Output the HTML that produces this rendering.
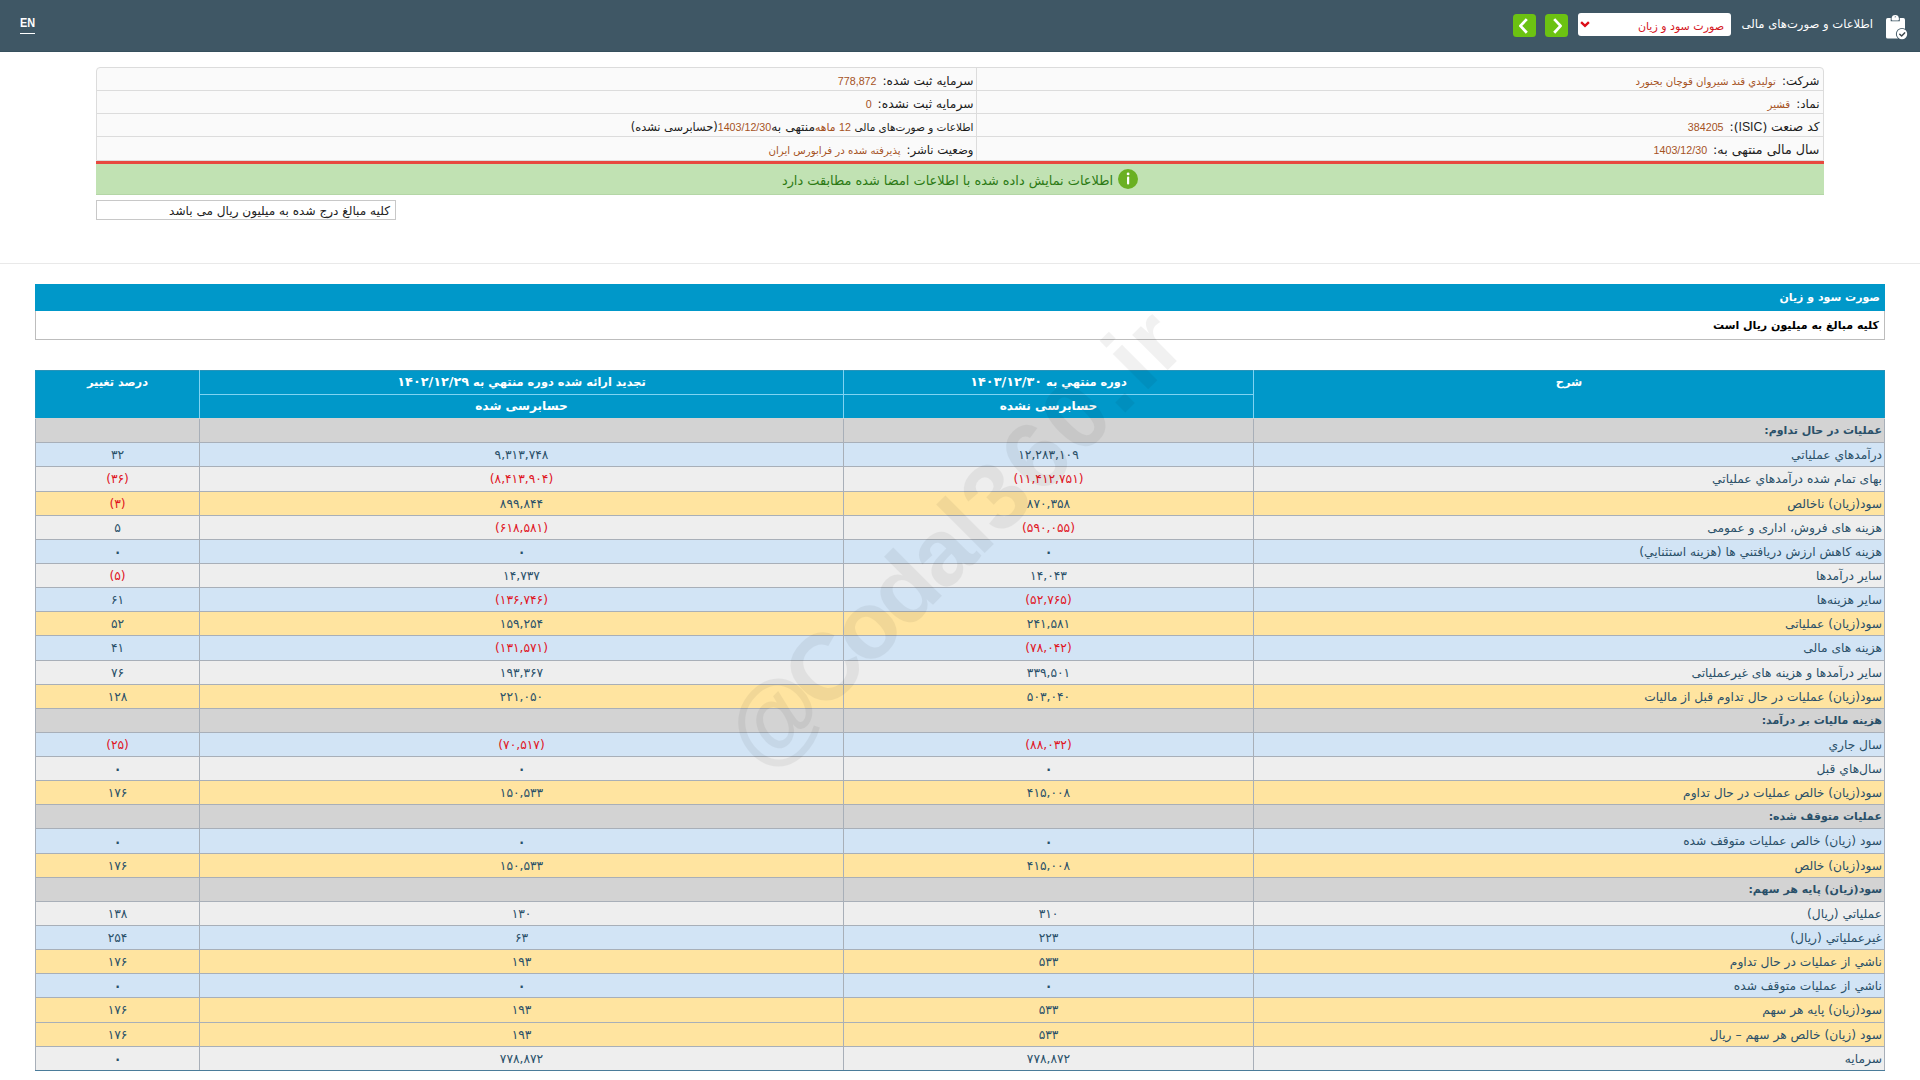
<!DOCTYPE html>
<html lang="fa" dir="rtl">
<head>
<meta charset="utf-8">
<title>صورت سود و زیان</title>
<style>
html,body{margin:0;padding:0;}
body{width:1920px;height:1080px;overflow:hidden;background:#fff;position:relative;font-family:"DejaVu Sans","Liberation Sans",sans-serif;font-size:11px;color:#222;direction:rtl;}
.en{font-family:"Liberation Sans","DejaVu Sans",sans-serif;}
.abs{position:absolute;white-space:nowrap;}
#hdr{position:absolute;left:0;top:0;width:1920px;height:52px;background:#3f5765;border-bottom:1px solid #36505d;box-sizing:border-box;}
#enlink{left:20px;top:14px;width:15px;height:19px;border-bottom:1px solid #fff;direction:ltr;text-align:left;}
#enlink span{display:inline-block;line-height:18px;font-weight:bold;font-size:12.5px;color:#fff;transform:scaleX(0.87);transform-origin:0 50%;}
#ttl{right:47px;top:12px;height:24px;line-height:24px;font-size:11.6px;color:#fff;}
#sel{left:1578px;top:13px;width:153px;height:23px;background:#fff;border-radius:3px;box-sizing:border-box;}
#sel span{position:absolute;right:7px;top:1.5px;line-height:23px;font-size:11px;color:#d4141c;}
.btn{top:14px;width:23px;height:23px;background:#6cc212;border-radius:3.5px;}
#info{position:absolute;left:96px;top:67px;width:1728px;height:94px;box-sizing:border-box;border:1px solid #dcdcdc;border-radius:4px 4px 0 0;background:#fafafa;}
#info .row{position:absolute;left:0;width:1726px;height:23px;border-bottom:1px solid #dcdcdc;box-sizing:border-box;}
#info .vd{position:absolute;left:879px;top:0;width:1px;height:92px;background:#dcdcdc;}
.lb{font-size:12.3px;color:#1c1c1c;}
.vl{font-size:10.2px;color:#a5521e;margin-right:6px;}
.vl.en{font-size:10.7px;}
.cell .vl .en{font-size:10.7px;}
.cell{position:absolute;top:2px;height:22px;line-height:22px;white-space:nowrap;}
#red{position:absolute;left:96px;top:161px;width:1728px;height:3px;background:#e8483f;}
#grn{position:absolute;left:96px;top:164px;width:1728px;height:31px;background:#c1e2b3;box-sizing:border-box;border-bottom:1px solid #b4d6a6;}
#grn span{position:absolute;right:711px;top:0.5px;line-height:31px;font-size:12.88px;color:#2c7a14;white-space:nowrap;}
#note{position:absolute;left:96px;top:200px;width:300px;height:20px;box-sizing:border-box;border:1px solid #c8c8c8;background:#fff;line-height:20px;font-size:12.1px;color:#222;padding-right:5px;white-space:nowrap;}
#sep{position:absolute;left:0;top:263px;width:1920px;height:1px;background:#e9e9e9;}
#tbar{position:absolute;left:35px;top:284px;width:1850px;height:27px;background:#0098c9;color:#fff;font-weight:bold;font-size:11px;line-height:27px;box-sizing:border-box;padding-right:5px;}
#tsub{position:absolute;left:35px;top:311px;width:1850px;height:29px;background:#fff;border:1px solid #bdbdbd;border-top:none;box-sizing:border-box;color:#000;font-weight:bold;font-size:11px;line-height:30px;padding-right:5px;}
#tb{position:absolute;left:35px;top:370px;width:1849px;border-collapse:collapse;table-layout:fixed;font-size:11px;color:#2a5069;}
#tb th{background:#0098c9;color:#fff;font-weight:bold;font-size:11.4px;height:23px;padding:0;border:1px solid #7fd3f2;border-top-color:#2a93b8;vertical-align:top;line-height:23px;text-align:center;}
#tb thead tr:first-child th:first-child{border-right-color:#1a94bf;}
#tb thead tr:first-child th:last-child{border-left-color:#1a94bf;}
#tb th .hd{font-size:12.8px;line-height:12px;}
#tb tr.h2 th{font-size:12.2px;}
#tb td{height:23px;padding:0;border:1px solid #a8afb8;text-align:center;line-height:22px;font-size:12.25px;vertical-align:middle;white-space:nowrap;}
#tb tr.t td{height:24px;}
#tb td.d{text-align:right;padding-right:2px;}
#tb tr.sec td{background:#d3d3d3;font-weight:bold;font-size:11px;}
#tb thead tr:last-child th, #tb th[rowspan]{border-bottom-color:#d3d3d3;}
#tb tr.b td{background:#d2e4f5;}
#tb tr.g td{background:#eeeeee;}
#tb tr.y td{background:#ffe4a0;}
#tb td.n{color:#e0141e;}
#tb .z{font-size:20px;line-height:0;position:relative;top:2.6px;}
#tb tbody tr:last-child td{border-bottom-color:#4b7c9a;}
#wm{position:absolute;left:952.5px;top:537.5px;width:0;height:0;opacity:0.05;}
#wm i{font-style:normal;}
#wm span{position:absolute;left:-400px;top:-60px;width:800px;height:120px;line-height:120px;text-align:center;font-family:"Liberation Sans",sans-serif;font-weight:bold;font-size:94.6px;color:#000;transform:rotate(-45deg);direction:ltr;white-space:nowrap;}
</style>
</head>
<body>
<div id="hdr">
  <div id="enlink" class="abs en"><span>EN</span></div>
  <svg class="abs" style="left:1885px;top:14px" width="26" height="28" viewBox="0 0 26 28">
    <rect x="1" y="4" width="19" height="20.6" rx="1.7" fill="#fff"/>
    <path d="M5.7 7.3V4.4Q5.9 0.1 10.25 0.1Q14.6 0.1 14.8 4.4V7.3z" fill="#3f5765"/>
    <path d="M6.6 5.4V4.4Q6.9 1 10.25 1Q13.6 1 13.9 4.4V5.4a1 1 0 0 1-1 1H7.6a1 1 0 0 1-1-1z" fill="#fff"/>
    <path d="M10.25 2.1l0.75 1.1h-1.5z" fill="#3f5765"/>
    <circle cx="17" cy="20" r="6.1" fill="#3f5765"/>
    <circle cx="17" cy="20" r="5.2" fill="#fff"/>
    <path d="M14.8 20.3l1.8 1.7 3-3.1" fill="none" stroke="#3d474d" stroke-width="1.5" stroke-linecap="round" stroke-linejoin="round"/>
  </svg>
  <div id="ttl" class="abs">اطلاعات و صورت‌های مالی</div>
  <div id="sel" class="abs"><span>صورت سود و زیان</span>
    <svg style="position:absolute;left:0;top:0" width="16" height="23" viewBox="0 0 16 23"><path d="M3.1 9.1L7 12.8L10.9 9.1" fill="none" stroke="#dc0d18" stroke-width="2.4" stroke-linecap="butt" stroke-linejoin="miter"/></svg>
  </div>
  <div class="btn abs" style="left:1545px"><svg width="23" height="23" viewBox="0 0 23 23"><path d="M9.2 5.1L15.6 11.9L9.2 18.7" fill="none" stroke="#fff" stroke-width="2.8" stroke-linecap="butt" stroke-linejoin="round"/></svg></div>
  <div class="btn abs" style="left:1513px"><svg width="23" height="23" viewBox="0 0 23 23"><path d="M13.8 5.1L7.4 11.9L13.8 18.7" fill="none" stroke="#fff" stroke-width="2.8" stroke-linecap="butt" stroke-linejoin="round"/></svg></div>
</div>

<div id="info">
  <div class="vd"></div>
  <div class="row" style="top:0">
    <div class="cell" style="right:3.5px"><span class="lb" style="font-size:11.8px">شرکت:</span><span class="vl">توليدي قند شيروان قوچان بجنورد</span></div>
    <div class="cell" style="right:849.5px"><span class="lb" style="font-size:12.2px">سرمایه ثبت شده:</span><span class="vl en">778,872</span></div>
  </div>
  <div class="row" style="top:23px">
    <div class="cell" style="right:3.5px"><span class="lb" style="font-size:12px">نماد:</span><span class="vl">قشير</span></div>
    <div class="cell" style="right:849.5px"><span class="lb" style="font-size:12.3px">سرمایه ثبت نشده:</span><span class="vl en">0</span></div>
  </div>
  <div class="row" style="top:46px">
    <div class="cell" style="right:3.5px"><span class="lb">کد صنعت (<span class="en">ISIC</span>):</span><span class="vl en">384205</span></div>
    <div class="cell" style="right:849.5px;font-size:11.1px;color:#1c1c1c"><span style="font-size:10.5px">اطلاعات و صورت‌های مالی</span> <span class="vl" style="margin:0;font-size:10.8px"><span class="en">12</span> ماهه</span>&zwnj;<span style="font-size:12.3px">منتهی به</span><span class="vl en" style="margin:0">1403/12/30</span><span style="font-size:11.4px">(حسابرسی نشده)</span></div>
  </div>
  <div class="row" style="top:69px;border-bottom:none">
    <div class="cell" style="right:3.5px"><span class="lb" style="font-size:12.7px">سال مالی منتهی به:</span><span class="vl en">1403/12/30</span></div>
    <div class="cell" style="right:849.5px"><span class="lb" style="font-size:11.7px">وضعیت ناشر:</span><span class="vl">پذیرفته شده در فرابورس ایران</span></div>
  </div>
</div>
<div id="red"></div>
<div id="grn">
  <svg style="position:absolute;left:1022px;top:5px" width="20" height="20" viewBox="0 0 20 20"><circle cx="10" cy="10" r="10" fill="#6ab023"/><rect x="9" y="7.6" width="2.2" height="8" rx="1" fill="#fff"/><circle cx="10.1" cy="4.9" r="1.4" fill="#fff"/></svg>
  <span>اطلاعات نمایش داده شده با اطلاعات امضا شده مطابقت دارد</span>
</div>
<div id="note">کلیه مبالغ درج شده به میلیون ریال می باشد</div>
<div id="sep"></div>

<div id="tbar">صورت سود و زیان</div>
<div id="tsub">کلیه مبالغ به میلیون ریال است</div>

<table id="tb">
<colgroup><col style="width:631px"><col style="width:410px"><col style="width:644px"><col style="width:164px"></colgroup>
<thead>
<tr><th rowspan="2">شرح</th><th>دوره منتهي به <span class="hd">۱۴۰۳/۱۲/۳۰</span></th><th>تجديد ارائه شده دوره منتهي به <span class="hd">۱۴۰۲/۱۲/۲۹</span></th><th rowspan="2">درصد تغییر</th></tr>
<tr class="h2"><th>حسابرسی نشده</th><th>حسابرسی شده</th></tr>
</thead>
<tbody>
<tr class="sec"><td class="d">عملیات در حال تداوم:</td><td></td><td></td><td></td></tr>
<tr class="b"><td class="d">درآمدهاي عملياتي</td><td>۱۲,۲۸۳,۱۰۹</td><td>۹,۳۱۳,۷۴۸</td><td>۳۲</td></tr>
<tr class="g t"><td class="d">بهاى تمام شده درآمدهاي عملياتي</td><td class="n">(۱۱,۴۱۲,۷۵۱)</td><td class="n">(۸,۴۱۳,۹۰۴)</td><td class="n">(۳۶)</td></tr>
<tr class="y"><td class="d">سود(زيان) ناخالص</td><td>۸۷۰,۳۵۸</td><td>۸۹۹,۸۴۴</td><td class="n">(۳)</td></tr>
<tr class="g"><td class="d">هزينه هاى فروش، ادارى و عمومى</td><td class="n">(۵۹۰,۰۵۵)</td><td class="n">(۶۱۸,۵۸۱)</td><td>۵</td></tr>
<tr class="b"><td class="d">هزينه کاهش ارزش دريافتني ها (هزينه استثنايي)</td><td><span class="z">۰</span></td><td><span class="z">۰</span></td><td><span class="z">۰</span></td></tr>
<tr class="g"><td class="d">ساير درآمدها</td><td>۱۴,۰۴۳</td><td>۱۴,۷۳۷</td><td class="n">(۵)</td></tr>
<tr class="b"><td class="d">ساير هزينه‌ها</td><td class="n">(۵۲,۷۶۵)</td><td class="n">(۱۳۶,۷۴۶)</td><td>۶۱</td></tr>
<tr class="y"><td class="d">سود(زيان) عملياتى</td><td>۲۴۱,۵۸۱</td><td>۱۵۹,۲۵۴</td><td>۵۲</td></tr>
<tr class="b t"><td class="d">هزينه هاى مالى</td><td class="n">(۷۸,۰۴۲)</td><td class="n">(۱۳۱,۵۷۱)</td><td>۴۱</td></tr>
<tr class="g"><td class="d">ساير درآمدها و هزينه هاى غيرعملياتى</td><td>۳۳۹,۵۰۱</td><td>۱۹۳,۳۶۷</td><td>۷۶</td></tr>
<tr class="y"><td class="d">سود(زيان) عمليات در حال تداوم قبل از ماليات</td><td>۵۰۳,۰۴۰</td><td>۲۲۱,۰۵۰</td><td>۱۲۸</td></tr>
<tr class="sec"><td class="d">هزينه ماليات بر درآمد:</td><td></td><td></td><td></td></tr>
<tr class="b"><td class="d">سال جاري</td><td class="n">(۸۸,۰۳۲)</td><td class="n">(۷۰,۵۱۷)</td><td class="n">(۲۵)</td></tr>
<tr class="g"><td class="d">سال‌هاي قبل</td><td><span class="z">۰</span></td><td><span class="z">۰</span></td><td><span class="z">۰</span></td></tr>
<tr class="y"><td class="d">سود(زيان) خالص عمليات در حال تداوم</td><td>۴۱۵,۰۰۸</td><td>۱۵۰,۵۳۳</td><td>۱۷۶</td></tr>
<tr class="sec"><td class="d">عمليات متوقف شده:</td><td></td><td></td><td></td></tr>
<tr class="b t"><td class="d">سود (زيان) خالص عمليات متوقف شده</td><td><span class="z">۰</span></td><td><span class="z">۰</span></td><td><span class="z">۰</span></td></tr>
<tr class="y"><td class="d">سود(زيان) خالص</td><td>۴۱۵,۰۰۸</td><td>۱۵۰,۵۳۳</td><td>۱۷۶</td></tr>
<tr class="sec"><td class="d">سود(زيان) پايه هر سهم:</td><td></td><td></td><td></td></tr>
<tr class="g"><td class="d">عملياتي (ريال)</td><td>۳۱۰</td><td>۱۳۰</td><td>۱۳۸</td></tr>
<tr class="b"><td class="d">غيرعملياتي (ريال)</td><td>۲۲۳</td><td>۶۳</td><td>۲۵۴</td></tr>
<tr class="y"><td class="d">ناشي از عمليات در حال تداوم</td><td>۵۳۳</td><td>۱۹۳</td><td>۱۷۶</td></tr>
<tr class="b"><td class="d">ناشي از عمليات متوقف شده</td><td><span class="z">۰</span></td><td><span class="z">۰</span></td><td><span class="z">۰</span></td></tr>
<tr class="y t"><td class="d">سود(زيان) پايه هر سهم</td><td>۵۳۳</td><td>۱۹۳</td><td>۱۷۶</td></tr>
<tr class="y"><td class="d">سود (زيان) خالص هر سهم – ريال</td><td>۵۳۳</td><td>۱۹۳</td><td>۱۷۶</td></tr>
<tr class="g"><td class="d">سرمايه</td><td>۷۷۸,۸۷۲</td><td>۷۷۸,۸۷۲</td><td><span class="z">۰</span></td></tr>
</tbody>
</table>

<div id="wm"><span><i style="letter-spacing:-9px">@</i><i style="letter-spacing:-5px">C</i><i style="letter-spacing:-4px">o</i><i style="letter-spacing:-3px">d</i><i style="letter-spacing:-2px">a</i><i style="letter-spacing:2px">l</i><i style="letter-spacing:4px">3</i><i style="letter-spacing:4px">6</i><i style="letter-spacing:5px">0</i><i style="letter-spacing:6px">.</i><i style="letter-spacing:1px">i</i><i>r</i></span></div>
</body>
</html>
